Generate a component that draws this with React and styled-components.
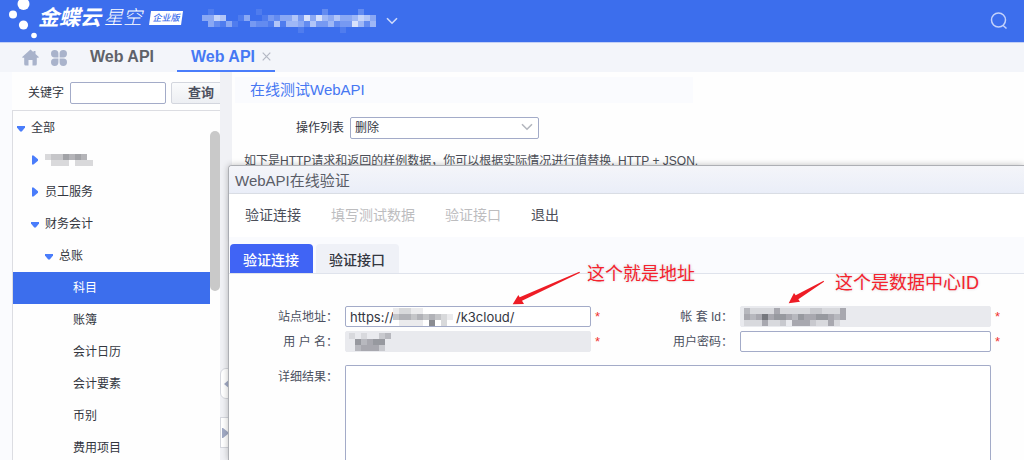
import React from "react";
import styled, { createGlobalStyle, css } from "styled-components";

const GlobalStyle = createGlobalStyle`
  *, *::before, *::after { box-sizing: border-box; }
  body {
    margin: 0;
    font-family: "Liberation Sans", "Noto Sans CJK SC", sans-serif;
    font-size: 12px;
    line-height: 20px;
    color: #33363f;
  }
  button, input, select, textarea { font: inherit; color: inherit; margin: 0; }
  button { border: 0; padding: 0; background: none; cursor: pointer; }
  ul { list-style: none; margin: 0; padding: 0; }
`;

const Page = styled.div`
  display: flex;
  flex-direction: column;
  height: 100vh;
  overflow: hidden;
  background: #fefefe;
`;

/* ---------- top bar ---------- */

const TopBar = styled.header`
  flex: none;
  display: flex;
  align-items: center;
  height: 42px;
  padding-right: 16px;
  background: #3c6eed;
  color: #fff;
`;

const Logo = styled.svg`
  flex: none;
  display: block;
  width: 38px;
  height: 42px;
`;

const Brand = styled.h1`
  display: flex;
  align-items: center;
  gap: 3px;
  height: 36px;
  margin: 0 0 6px;
  font-size: 21px;
  line-height: 28px;
  font-style: italic;
  font-weight: 700;
  white-space: nowrap;
`;

const BrandLight = styled.span`
  font-size: 19px;
  font-weight: 300;
`;

const Edition = styled.span`
  width: 34px;
  height: 14px;
  margin-left: 4px;
  clip-path: polygon(2px 0, 100% 0, 32px 100%, 0 100%);
  background: #fff;
  color: #3c6eed;
  font-size: 9px;
  font-weight: 500;
  line-height: 14px;
  text-align: center;
`;

const AccountButton = styled.button`
  display: flex;
  align-items: center;
  gap: 10px;
  margin-left: 19px;
`;

const SearchButton = styled.button`
  margin-left: auto;
  height: 18px;
  svg { display: block; }
`;

/* ---------- page tabs ---------- */

const TabBar = styled.nav`
  flex: none;
  display: flex;
  align-items: stretch;
  height: 30px;
  padding-left: 22px;
  border-top: 1px solid #c3d0f6;
  background: #f3f5fa;
`;

const IconButton = styled.button`
  display: flex;
  align-items: center;
  margin-right: 12px;
`;

const PageTab = styled.a`
  display: flex;
  align-items: center;
  gap: 7px;
  padding: 0 ${(p) => (p.$active ? 4 : 11)}px 0 ${(p) => (p.$active ? 14 : 11)}px;
  margin-right: 12px;
  border-bottom: 2px solid ${(p) => (p.$active ? "#4a7dfb" : "transparent")};
  color: ${(p) => (p.$active ? "#4679f4" : "#606269")};
  font-size: 16px;
  font-weight: 700;
  text-decoration: none;
`;

/* ---------- workspace ---------- */

const Workspace = styled.div`
  position: relative;
  flex: 1;
  display: flex;
  min-height: 0;
`;

const Sidebar = styled.aside`
  flex: none;
  display: flex;
  flex-direction: column;
  width: 220px;
  padding-left: 12px;
  overflow: hidden;
  background: linear-gradient(to right, #fafbfe 12px, #fefefe 12px);
`;

const KeywordForm = styled.form`
  flex: none;
  display: flex;
  align-items: center;
  height: 38px;
  padding: 4px 0 0 16px;
  white-space: nowrap;
`;

const KeywordLabel = styled.label`
  flex: none;
`;

const KeywordInput = styled.input`
  flex: none;
  width: 96px;
  height: 22px;
  margin: 0 5px 0 6px;
  border: 1px solid #a3abc8;
  border-radius: 2px;
  background: #fff;
`;

const QueryButton = styled.button`
  flex: none;
  width: 60px;
  height: 22px;
  border: 1px solid #d3d6de;
  border-radius: 2px;
  background: linear-gradient(#fafbfc, #edeff3);
  color: #4d5160;
  font-weight: 700;
  font-size: 13px;
  line-height: 20px;
`;

const TreePanel = styled.div`
  flex: 1;
  display: flex;
  min-height: 0;
  overflow: hidden;
  border-top: 1px solid #dcdde2;
  border-left: 1px solid #dcdde2;
`;

const Tree = styled.ul`
  flex: 1;
  padding-top: 1px !important;
`;

const TreeItem = styled.li`
  display: flex;
  align-items: center;
  gap: 6px;
  height: 32px;
  padding-left: ${(p) => 4 + p.$level * 14}px;
  ${(p) =>
    p.$selected &&
    css`
      background: #3c6eed;
      color: #fff;
    `}
`;

const Twisty = styled.svg`
  flex: none;
  width: 8px;
  height: 10px;
`;

const ScrollTrack = styled.div`
  flex: none;
  width: 10px;
  padding-top: 20px;
`;

const ScrollThumb = styled.div`
  height: 160px;
  border-radius: 5px;
  background: #c9c9c9;
`;

const Splitter = styled.div`
  flex: none;
  display: flex;
  flex-direction: column;
  gap: 18px;
  width: 12px;
  padding-top: 296px;
  background: #f0f1f5;
`;

const CollapseButton = styled.button`
  display: flex;
  align-items: center;
  flex: none;
  height: 31px;
  padding-left: ${(p) => (p.$round ? 3 : 1)}px;
  border: 1px solid #d5d7de;
  border-radius: ${(p) => (p.$round ? "6px 0 0 6px" : 0)};
  background: #fff;
`;

const Main = styled.main`
  flex: 1;
  min-width: 0;
  padding: 5px 0 0 3px;
`;

const SectionTitle = styled.h2`
  width: 58%;
  margin: 0;
  padding: 3px 0 3px 15px;
  background: #fafbfe;
  color: #4677f2;
  font-size: 15px;
  font-weight: 400;
  line-height: 20px;
`;

const OperationRow = styled.div`
  display: flex;
  align-items: center;
  gap: 6px;
  padding: 14px 0 0 61px;
`;

const SelectBox = styled.div`
  position: relative;
  svg {
    position: absolute;
    right: 6px;
    top: 6px;
    pointer-events: none;
  }
`;

const Select = styled.select`
  display: block;
  width: 189px;
  height: 22px;
  padding: 0 4px;
  appearance: none;
  border: 1px solid #a3abc8;
  border-radius: 2px;
  background: #fff;
  line-height: 18px;
`;

const Hint = styled.p`
  margin: 12px 0 0;
  padding-left: 9px;
  color: #4b4e57;
`;

/* ---------- verification dialog ---------- */

const Dialog = styled.section`
  position: absolute;
  left: 228px;
  top: 93px;
  right: 0;
  bottom: 0;
  display: flex;
  flex-direction: column;
  border: solid #adafb4;
  border-width: 1px 0 0 1px;
  border-radius: 4px 0 0 0;
  background: #fefefe;
  box-shadow: 0 0 6px rgba(0, 0, 0, 0.25);
`;

const DialogTitle = styled.h2`
  flex: none;
  margin: 0;
  padding: 5px 6px 2px;
  border-bottom: 1px solid #dcdfe6;
  border-radius: 3px 0 0 0;
  background: linear-gradient(#f4f5f9, #eaeef8);
  color: #5a5d67;
  font-size: 15px;
  font-weight: 400;
  line-height: 20px;
`;

const Toolbar = styled.div`
  flex: none;
  display: flex;
  align-items: center;
  gap: 30px;
  height: 43px;
  padding: 0 16px 2px;
  background: #fff;
  box-shadow: 0 2px 4px rgba(120, 130, 160, 0.14);
`;

const ToolButton = styled.button`
  color: #4b4e58;
  font-size: 14px;
  &:disabled { color: #bdbdbf; }
`;

const TabStrip = styled.div`
  flex: none;
  display: flex;
  gap: 3px;
  padding: 7px 1px 0;
  border-bottom: 1px solid #dfe3ec;
  background: #fafbfe;
`;

const DialogTab = styled.button`
  height: 29px;
  padding: 2px 14px 0 13px;
  border-radius: 4px 4px 0 0;
  background: ${(p) => (p.$active ? "#4064f5" : "#eff1f7")};
  color: ${(p) => (p.$active ? "#fff" : "#33363f")};
  font-size: 14px;
  font-weight: 500;
`;

const Form = styled.form`
  flex: 1;
  display: grid;
  grid-template-columns: 110px minmax(0, 246fr) 12px 119px minmax(0, 251fr) 27px;
  grid-template-rows: 21px 21px minmax(0, 1fr);
  column-gap: 6px;
  row-gap: 4px;
  min-height: 0;
  padding-top: 32px;
`;

const Label = styled.label`
  padding: 1px 1px 0 0;
  color: #4b5060;
  text-align: right;
  white-space: pre;
`;

const FieldBox = styled.div`
  position: relative;
`;

const TextInput = styled.input`
  display: block;
  width: 100%;
  height: 21px;
  padding: 0 4px;
  border: 1px solid #a3abc8;
  border-radius: 2px;
  background: #fff;
  font-family: Inter, "Noto Sans CJK SC", sans-serif;
  font-size: 13px;
  &:disabled {
    border-color: #e9eaee;
    background: #e9eaee;
  }
`;

const Required = styled.span`
  margin-left: -2px;
  color: #f0342f;
  font-size: 13px;
  line-height: 22px;
`;

const ResultLabel = styled(Label)`
  padding-top: 11px;
`;

const Result = styled.textarea`
  grid-column: 2 / 6;
  display: block;
  width: 100%;
  margin-top: 9px;
  resize: none;
  border: 1px solid #a3abc8;
  border-bottom: 0;
  border-radius: 2px 2px 0 0;
  background: #fff;
`;

const MaskOverlay = styled.div`
  position: absolute;
  left: ${(p) => p.$left}px;
  top: 2px;
  background: ${(p) => (p.$plain ? "#fff" : "none")};
`;

const Note = styled.div`
  position: absolute;
  left: ${(p) => p.$left}px;
  top: ${(p) => p.$top}px;
  display: flex;
  align-items: flex-start;
  gap: 5px;
  color: #f5222d;
  font-size: 18px;
  line-height: 22px;
  white-space: nowrap;
  text-shadow: 0 0 3px #cfcfd2, 0 0 2px #fff;
  svg { flex: none; margin-top: 8px; }
`;

/* ---------- masked text ---------- */

const MosaicSvg = styled.svg`
  display: block;
  flex: none;
`;

function Mosaic({ rows, color }) {
  const columns = rows[0].length;
  return (
    <MosaicSvg
      width={columns * 6}
      height={rows.length * 6}
      fill={color}
      shapeRendering="crispEdges"
      aria-hidden="true"
    >
      {rows.flatMap((row, y) =>
        [...row].map((level, x) =>
          level === "0" ? null : (
            <rect key={`${x}-${y}`} x={x * 6} y={y * 6} width="6" height="6" opacity={Number(level) / 10} />
          )
        )
      )}
    </MosaicSvg>
  );
}

const ACCOUNT_MASK = [
  "01000000010000000000200000200",
  "44760014001324463848546445764",
  "04214100322161554263352338525",
  "00000000000000001000000100000",
];
const TREE_MASK = ["23354540", "02220222"];
const SITE_MASK = ["1221100000", "3443434321", "0111106020"];
const USER_MASK = ["1010023", "0534550", "0344420"];
const ID_MASK = ["31111411111221114", "43474554354455434", "11141120444211410"];

const TREE = [
  { level: 0, state: "open", text: "全部" },
  { level: 1, state: "closed", mask: TREE_MASK },
  { level: 1, state: "closed", text: "员工服务" },
  { level: 1, state: "open", text: "财务会计" },
  { level: 2, state: "open", text: "总账" },
  { level: 4, text: "科目", selected: true },
  { level: 4, text: "账簿" },
  { level: 4, text: "会计日历" },
  { level: 4, text: "会计要素" },
  { level: 4, text: "币别" },
  { level: 4, text: "费用项目" },
];

function TreeArrow({ state }) {
  return (
    <Twisty viewBox="0 0 8 10" fill="#4a7dfb" aria-hidden="true">
      {state === "open" ? <path d="M0 3h8v1.5L4.8 8.5H3.2L0 4.500z" /> : <path d="M1 0.500h1.500L7 4.200v1.600L2.500 9.500H1z" />}
    </Twisty>
  );
}

function Chevron({ color, width }) {
  return (
    <svg width={width} height="8" viewBox="0 0 12 8" fill="none" stroke={color} strokeWidth="1.600" aria-hidden="true">
      <path d="M1 1.200l5 5 5-5" />
    </svg>
  );
}

export default function App() {
  return (
    <>
      <GlobalStyle />
      <Page>
        <TopBar>
          <Logo viewBox="0 0 38 42" fill="#fff" aria-hidden="true">
            <circle cx="23.500" cy="4" r="6" />
            <circle cx="13" cy="14.500" r="4" />
            <circle cx="23.500" cy="25" r="4.600" />
            <circle cx="34" cy="35.500" r="2.800" />
          </Logo>
          <Brand>
            金蝶云
            <BrandLight>星空</BrandLight>
            <Edition>企业版</Edition>
          </Brand>
          <AccountButton type="button" aria-label="切换账户">
            <Mosaic rows={ACCOUNT_MASK} color="#fff" />
            <Chevron color="#cfdbfb" width={12} />
          </AccountButton>
          <SearchButton type="button" aria-label="搜索">
            <svg width="18" height="18" viewBox="0 0 18 18" fill="none" stroke="#c3d2fb" strokeWidth="1.500">
              <circle cx="8.500" cy="8" r="7" />
              <path d="M12.800 13.200l3.700 3.300" />
            </svg>
          </SearchButton>
        </TopBar>

        <TabBar>
          <IconButton type="button" aria-label="首页">
            <svg width="17" height="17" viewBox="0 0 17 17" fill="#a9b3cb">
              <path d="M8.500 0.500L0.200 8q-.3.800.6.800H2.200V15q0 1.500 1.500 1.500H6.500V11h4v5.500h2.800q1.500 0 1.500-1.500V8.800h1.400q.9 0 .6-.8L13.500 5V2h-2v1.200z" />
            </svg>
          </IconButton>
          <IconButton type="button" aria-label="应用">
            <svg width="16" height="16" viewBox="0 0 16 16" fill="#a9b3cb">
              <path d="M3.700 0a3.700 3.700 0 0 1 3.700 3.700v3.700H3.700a3.700 3.700 0 0 1 0-7.400z" />
              <path d="M12.300 0a3.700 3.700 0 0 1 0 7.400H8.600V3.700A3.700 3.700 0 0 1 12.300 0z" />
              <path d="M3.700 8.600h3.700v3.700a3.700 3.700 0 1 1-3.700-3.700z" />
              <path d="M8.600 8.600h3.700a3.700 3.700 0 1 1-3.700 3.700z" />
            </svg>
          </IconButton>
          <PageTab href="#">Web API</PageTab>
          <PageTab href="#" $active>
            Web API
            <svg width="9" height="9" viewBox="0 0 9 9" stroke="#b4b8c4" strokeWidth="1.200" aria-hidden="true">
              <path d="M.7.7l7.600 7.600M8.300.7L.7 8.300" />
            </svg>
          </PageTab>
        </TabBar>

        <Workspace>
          <Sidebar>
            <KeywordForm onSubmit={(e) => e.preventDefault()}>
              <KeywordLabel htmlFor="keyword">关键字</KeywordLabel>
              <KeywordInput id="keyword" />
              <QueryButton type="submit">查询</QueryButton>
            </KeywordForm>
            <TreePanel>
              <Tree>
                {TREE.map((node, i) => (
                  <TreeItem key={i} $level={node.level} $selected={node.selected}>
                    {node.state && <TreeArrow state={node.state} />}
                    {node.mask ? <Mosaic rows={node.mask} color="#45474f" /> : <span>{node.text}</span>}
                  </TreeItem>
                ))}
              </Tree>
              <ScrollTrack>
                <ScrollThumb />
              </ScrollTrack>
            </TreePanel>
          </Sidebar>

          <Splitter>
            <CollapseButton type="button" $round aria-label="收起">
              <svg width="6" height="10" viewBox="0 0 6 10" fill="#a2abc5">
                <path d="M6 0v10L0 5z" />
              </svg>
            </CollapseButton>
            <CollapseButton type="button" aria-label="展开">
              <svg width="6" height="10" viewBox="0 0 6 10" fill="#a2abc5">
                <path d="M0 0h1l5 4v2l-5 4H0z" />
              </svg>
            </CollapseButton>
          </Splitter>

          <Main>
            <SectionTitle>在线测试WebAPI</SectionTitle>
            <OperationRow>
              <label htmlFor="operation">操作列表</label>
              <SelectBox>
                <Select id="operation" defaultValue="删除">
                  <option>删除</option>
                </Select>
                <Chevron color="#b3b6be" width={12} />
              </SelectBox>
            </OperationRow>
            <Hint>如下是HTTP请求和返回的样例数据，你可以根据实际情况进行值替换, HTTP + JSON.</Hint>
          </Main>

          <Dialog role="dialog" aria-labelledby="dialog-title">
            <DialogTitle id="dialog-title">WebAPI在线验证</DialogTitle>
            <Toolbar>
              <ToolButton type="button">验证连接</ToolButton>
              <ToolButton type="button" disabled>填写测试数据</ToolButton>
              <ToolButton type="button" disabled>验证接口</ToolButton>
              <ToolButton type="button">退出</ToolButton>
            </Toolbar>
            <TabStrip>
              <DialogTab type="button" $active>验证连接</DialogTab>
              <DialogTab type="button">验证接口</DialogTab>
            </TabStrip>
            <Form onSubmit={(e) => e.preventDefault()}>
              <Label htmlFor="site">站点地址：</Label>
              <FieldBox>
                <TextInput id="site" defaultValue={"https://\u2003\u2003\u2003\u2003\u2002\u00a0/k3cloud/"} />
                <MaskOverlay $left={48} $plain>
                  <Mosaic rows={SITE_MASK} color="#3c3f4a" />
                </MaskOverlay>
                <Note $left={167} $top={-43}>
                  <svg width="70" height="34" viewBox="36 62 210 102" fill="#ee1c25" aria-hidden="true">
                    <path d="M38 162L55 134 59 141 238 64 240 67 66 151 72 161z" />
                  </svg>
                  这个就是地址
                </Note>
              </FieldBox>
              <Required>*</Required>
              <Label htmlFor="account-id">帐 套 Id：</Label>
              <FieldBox>
                <TextInput id="account-id" disabled />
                <MaskOverlay $left={4}>
                  <Mosaic rows={ID_MASK} color="#45474f" />
                </MaskOverlay>
                <Note $left={48} $top={-34}>
                  <svg width="42" height="24" viewBox="384 56 126 72" fill="#ee1c25" aria-hidden="true">
                    <path d="M386 126L402 95 407 102 491 58 492 61 415 114 420 121z" />
                  </svg>
                  这个是数据中心ID
                </Note>
              </FieldBox>
              <Required>*</Required>

              <Label htmlFor="user">用 户 名：</Label>
              <FieldBox>
                <TextInput id="user" disabled />
                <MaskOverlay $left={4}>
                  <Mosaic rows={USER_MASK} color="#45474f" />
                </MaskOverlay>
              </FieldBox>
              <Required>*</Required>
              <Label htmlFor="password">用户密码：</Label>
              <FieldBox>
                <TextInput id="password" type="password" />
              </FieldBox>
              <Required>*</Required>

              <ResultLabel htmlFor="result">详细结果：</ResultLabel>
              <Result id="result" />
            </Form>
          </Dialog>
        </Workspace>
      </Page>
    </>
  );
}
